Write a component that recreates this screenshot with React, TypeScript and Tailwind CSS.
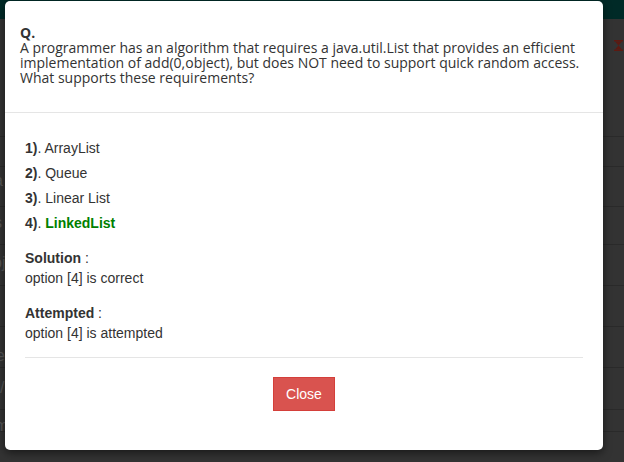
import React from "react";

const rows = [118, 30, 40, 38, 41, 41, 41, 42, 22];

const frags: [number, number, string][] = [
  [-6, 173, "a"],
  [-6, 215, "s"],
  [-7, 255, "oj"],
  [-4, 348, "e"],
  [0, 380, "/"],
  [-5, 418, "m"],
];

export default function App() {
  return (
    <div className="relative w-[624px] h-[462px] overflow-hidden bg-[#333333]" style={{ fontFamily: '"Liberation Sans", Arial, sans-serif' }}>
      {/* backdrop page */}
      <div className="flex flex-col">
        <div className="h-[19px] bg-[#002a27]" />
        {rows.map((h, i) => (
          <div key={i} className="border-b border-[#2a2a2a]" style={{ height: h }} />
        ))}
      </div>
      {frags.map(([x, y, t], i) => (
        <span key={i} className="absolute text-[#555] text-[16px] leading-none" style={{ left: x, top: y }}>{t}</span>
      ))}
      <svg className="absolute left-[614px] top-[40px]" width="9" height="11" viewBox="0 0 9 11">
        <rect x="0" y="0" width="9" height="1.5" fill="#5c1a12" />
        <rect x="0" y="9.5" width="9" height="1.5" fill="#5c1a12" />
        <path d="M1 1.5 L8 1.5 L4.5 5.5 Z" fill="#5c1a12" />
        <path d="M4.5 5.5 L8 9.5 L1 9.5 Z" fill="#5c1a12" />
      </svg>

      {/* modal */}
      <div className="absolute left-[5px] top-[1px] w-[598px] h-[449px] bg-white rounded-[5px] shadow-[0_3px_9px_rgba(0,0,0,0.5)]">
        <div className="px-[15px] pt-[24px] pb-[27px] border-b border-[#e5e5e5] text-[#333] text-[14px] leading-[15px]" style={{ fontFamily: '"Open Sans", sans-serif' }}>
          <div className="font-bold">Q.</div>
          <div>
            A programmer has an algorithm that requires a java.util.List that provides an efficient implementation of add(0,object), but does NOT need to support quick random access. What supports these requirements?
          </div>
        </div>
        <div className="px-[20px] pt-[23px] text-[#333] text-[14px]">
          <div className="flex flex-col">
            <div className="h-[25px] leading-[25px]"><b>1)</b>. ArrayList</div>
            <div className="h-[25px] leading-[25px]"><b>2)</b>. Queue</div>
            <div className="h-[25px] leading-[25px]"><b>3)</b>. Linear List</div>
            <div className="h-[25px] leading-[25px]"><b>4)</b>. <b className="text-[#008000]">LinkedList</b></div>
          </div>
          <div className="mt-[12px] leading-[20px]">
            <div><b>Solution</b> :</div>
            <div>option [4] is correct</div>
          </div>
          <div className="mt-[15px] leading-[20px]">
            <div><b>Attempted</b> :</div>
            <div>option [4] is attempted</div>
          </div>
          <div className="mt-[14px] border-t border-[#e5e5e5]" />
          <div className="flex justify-center pt-[19px]">
            <button className="w-[62px] h-[34px] bg-[#d9534f] border border-[#d43f3a] text-white text-[14px]">Close</button>
          </div>
        </div>
      </div>
    </div>
  );
}
